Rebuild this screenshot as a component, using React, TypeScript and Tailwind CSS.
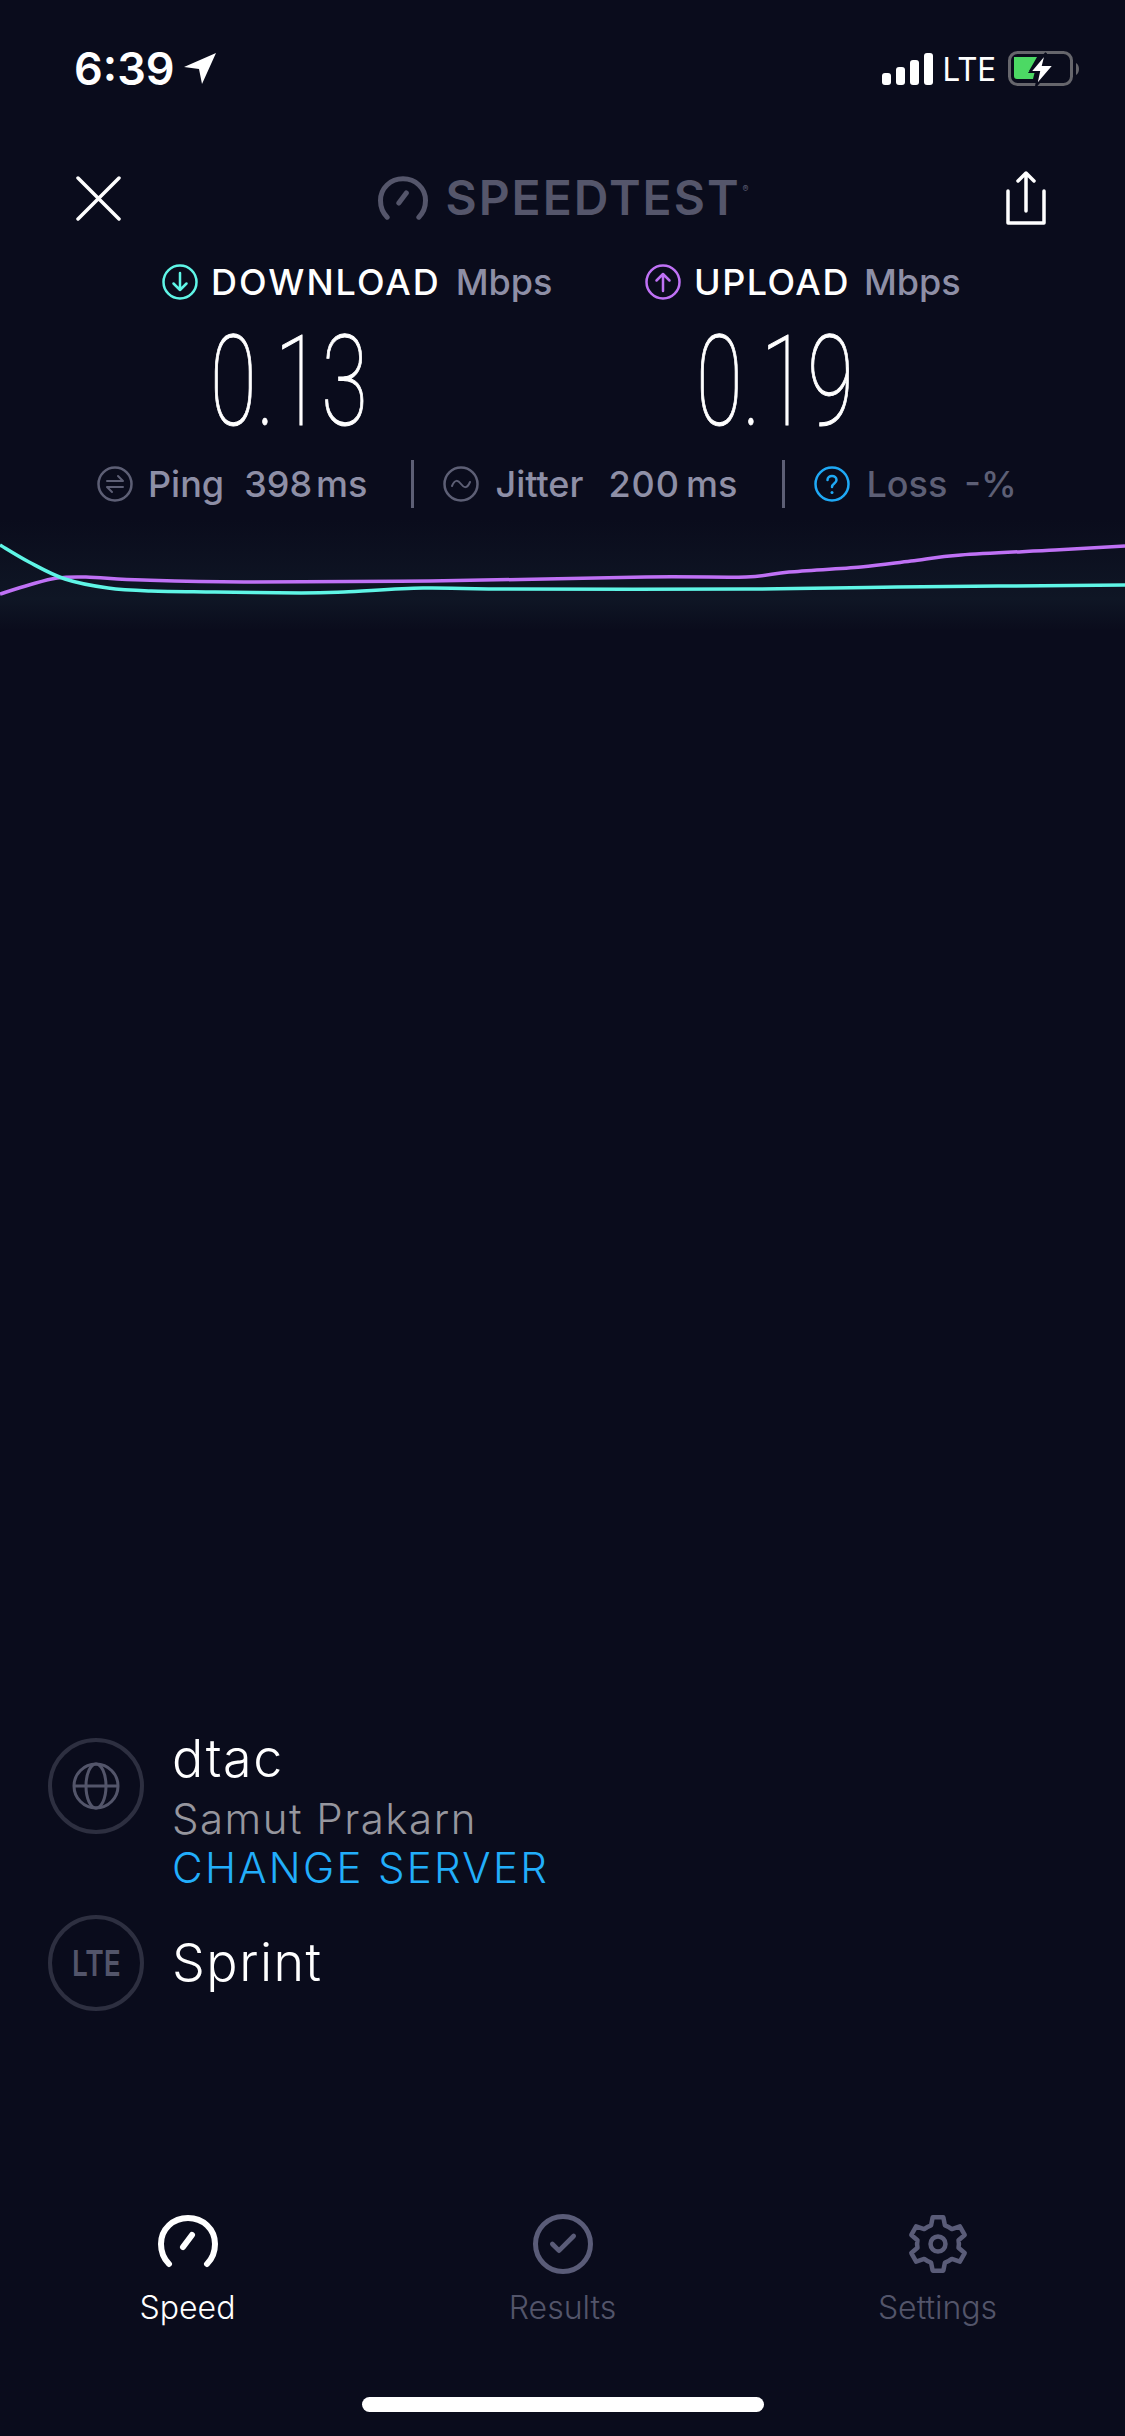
import { Check } from 'lucide-react'

const sans = 'font-[Inter,sans-serif]'

const uploadLine = [
  [0, 74], [29, 65], [57, 58], [86, 57], [143, 60], [244, 62], [430, 61], [646, 57], [746, 57],
  [789, 52], [861, 47], [911, 41], [961, 35], [1055, 30], [1125, 26],
]
const downloadLine = [
  [0, 25], [29, 42], [65, 59], [108, 68], [151, 71], [215, 72], [301, 73], [344, 72], [423, 68],
  [502, 69], [746, 69], [897, 67], [1125, 65],
]

// smooth line through the points
function smooth(pts: number[][]) {
  let d = `M${pts[0][0]} ${pts[0][1]}`
  for (let i = 0; i < pts.length - 1; i++) {
    const p0 = pts[i - 1] || pts[i]
    const p1 = pts[i]
    const p2 = pts[i + 1]
    const p3 = pts[i + 2] || p2
    const c1x = p1[0] + (p2[0] - p0[0]) / 6
    const c1y = p1[1] + (p2[1] - p0[1]) / 6
    const c2x = p2[0] - (p3[0] - p1[0]) / 6
    const c2y = p2[1] - (p3[1] - p1[1]) / 6
    d += `C${c1x} ${c1y} ${c2x} ${c2y} ${p2[0]} ${p2[1]}`
  }
  return d
}

function Gauge({ className, width }: { className: string; width: number }) {
  return (
    <svg viewBox="0 0 60 52" fill="none" stroke="currentColor" strokeLinecap="round" className={className}>
      <path d="M11 49C5 43 3 36 3 29C3 14 15 3 30 3C45 3 57 14 57 29C57 36 55 43 49 49" strokeWidth={width} />
      <path d="M25 32L34 20" strokeWidth={width} />
    </svg>
  )
}

function RoundIcon({ color, children }: { color: string; children: React.ReactNode }) {
  return (
    <svg viewBox="0 0 36 36" fill="none" stroke={color} strokeWidth="2.500" strokeLinecap="round" strokeLinejoin="round" className="w-[36px] h-[36px] shrink-0">
      <circle cx="18" cy="18" r="16.500" />
      {children}
    </svg>
  )
}

function StatusBar() {
  return (
    <div className="h-[144px] pt-[45px] pl-[74px] pr-[44px] flex items-start justify-between">
      <div className="flex items-center gap-[9px] text-white">
        <span className={`${sans} text-[45px] leading-[48px] font-semibold`}>6:39</span>
        <svg viewBox="0 0 32 32" className="w-[32px] h-[32px]">
          <path d="M32 0L18 31L15 16L0 14Z" fill="white" />
        </svg>
      </div>
      <div className="flex items-center h-[48px] text-white">
        <div className="flex items-end gap-[5px] h-[32px]">
          <div className="w-[9px] h-[12px] rounded-[3px] bg-white" />
          <div className="w-[9px] h-[18px] rounded-[3px] bg-white" />
          <div className="w-[9px] h-[25px] rounded-[3px] bg-white" />
          <div className="w-[9px] h-[32px] rounded-[3px] bg-white" />
        </div>
        <span className={`${sans} text-[33px] leading-[48px] font-normal ml-[10px] w-[52px] flex justify-center`}>
          <span className="scale-x-[0.95]">LTE</span>
        </span>
        <svg viewBox="0 0 73 36" className="w-[73px] h-[36px] ml-[13px]">
          <rect x="1.500" y="1.500" width="62" height="32" rx="8" fill="none" stroke="#66666c" strokeWidth="3" />
          <path d="M68 12C72 14 72 22 68 24Z" fill="#66666c" />
          <path d="M6 6H29L21 20H27L25 28H9Q6 28 6 25Z" fill="#4cd964" />
          <path d="M38 2L22 21H31L28 35L46 14H35Z" fill="white" stroke="#0a0c1c" strokeWidth="2" />
        </svg>
      </div>
    </div>
  )
}

function TopBar() {
  return (
    <div className="h-[108px] pl-[76px] pr-[79px] flex items-center justify-between">
      <svg viewBox="0 0 45 45" className="w-[45px] h-[45px]" stroke="white" strokeWidth="3.500" strokeLinecap="round">
        <path d="M2 2L43 43M43 2L2 43" />
      </svg>
      <div className="flex items-center gap-[17px] text-[#55566b] pr-[8px]">
        <Gauge className="w-[50px] h-[44px]" width={6} />
        <span className={`${sans} text-[48px] leading-[48px] font-semibold tracking-[2px] relative`}>
          SPEEDTEST
          <sup className="absolute -right-[8px] top-[10px] text-[9px] leading-[9px] tracking-normal">®</sup>
        </span>
      </div>
      <svg viewBox="0 0 40 54" fill="none" stroke="white" strokeWidth="3.500" strokeLinecap="round" strokeLinejoin="round" className="w-[40px] h-[54px]">
        <path d="M20 40V2M12 10L20 2L28 10" />
        <path d="M2 20V52H38V20" />
      </svg>
    </div>
  )
}

function Speeds() {
  const header = `${sans} flex items-center text-[36px] leading-[40px] font-medium`
  const value = 'font-[Roboto,sans-serif] font-thin text-white text-[126px] leading-[118px] scale-x-[0.675] [-webkit-text-stroke:1px_white]'
  return (
    <div className="mt-[10px] pl-[162px] flex">
      <div className="w-[483px]">
        <div className={header}>
          <RoundIcon color="#5ff5e6">
            <path d="M18 9V26M11.500 19.500L18 26L24.500 19.500" />
          </RoundIcon>
          <span className="text-white ml-[13px] tracking-[2px]">DOWNLOAD</span>
          <span className="text-[#8e8fa6] ml-[15px]">Mbps</span>
        </div>
        <div className="w-[254px] mt-[21px] h-[118px] flex items-center justify-center">
          <span className={value}>0.13</span>
        </div>
      </div>
      <div>
        <div className={header}>
          <RoundIcon color="#bf71f5">
            <path d="M18 27V10M11.500 16.500L18 10L24.500 16.500" />
          </RoundIcon>
          <span className="text-white ml-[13px] tracking-[1.500px]">UPLOAD</span>
          <span className="text-[#8e8fa6] ml-[14px]">Mbps</span>
        </div>
        <div className="w-[260px] mt-[21px] h-[118px] flex items-center justify-center">
          <span className={value}>0.19</span>
        </div>
      </div>
    </div>
  )
}

function Stats() {
  return (
    <div className={`${sans} mt-[19px] pl-[97px] flex items-center h-[48px] text-[36px] font-medium text-[#8e8fa6]`}>
      <RoundIcon color="#5d5f75">
        <path d="M10 15H26L21 10M26 21H10L15 26" strokeWidth="2" />
      </RoundIcon>
      <span className="ml-[15px]">Ping</span>
      <span className="ml-[20px]">398</span>
      <span className="ml-[4px]">ms</span>
      <div className="w-[3px] h-[48px] bg-[#5d5f75] ml-[44px]" />
      <div className="ml-[29px]">
        <RoundIcon color="#5d5f75">
          <path d="M9 20C12 13 15 14 18 18C21 22 24 23 27 16" strokeWidth="2" />
        </RoundIcon>
      </div>
      <span className="ml-[16px]">Jitter</span>
      <span className="ml-[25px] tracking-[1px]">200</span>
      <span className="ml-[6px]">ms</span>
      <div className="w-[3px] h-[48px] bg-[#5d5f75] ml-[45px]" />
      <div className="ml-[29px]">
        <RoundIcon color="#1fa9f5">
          <path d="M13.500 14C13.500 8.500 22.500 8.500 22.500 14C22.500 17.500 18 17.500 18 21" strokeWidth="2.500" />
          <path d="M18 26.500V26.600" strokeWidth="3" />
        </RoundIcon>
      </div>
      <span className="ml-[16px] text-[#5d5f75]">Loss</span>
      <span className="ml-[17px] text-[#5d5f75]">-%</span>
    </div>
  )
}

function Chart() {
  return (
    <svg viewBox="0 0 1125 110" className="w-[1125px] h-[110px] mt-[12px] block" fill="none">
      <defs>
        <linearGradient id="glow" x1="0" y1="0" x2="0" y2="1">
          <stop offset="0" stopColor="#14202e" stopOpacity="0" />
          <stop offset="0.72" stopColor="#14202e" stopOpacity="0.5" />
          <stop offset="1" stopColor="#14202e" stopOpacity="0" />
        </linearGradient>
      </defs>
      <rect x="0" y="0" width="1125" height="110" fill="url(#glow)" />
      <path d={smooth(uploadLine)} stroke="#bf71f5" strokeWidth="3.500" />
      <path d={smooth(downloadLine)} stroke="#5ff5e6" strokeWidth="3.500" />
    </svg>
  )
}

function Servers() {
  return (
    <div className={`${sans} mt-[1108px] pl-[48px]`}>
      <div className="flex items-start gap-[28px]">
        <div className="w-[96px] h-[96px] rounded-full border-[4px] border-[#2d2f40] flex items-center justify-center">
          <svg viewBox="0 0 48 48" fill="none" stroke="#53556a" strokeWidth="3" className="w-[48px] h-[48px]">
            <circle cx="24" cy="24" r="22" />
            <ellipse cx="24" cy="24" rx="10" ry="22" />
            <path d="M2 24H46" />
          </svg>
        </div>
        <div className="flex flex-col -mt-[5px]">
          <span className="text-[52px] leading-[52px] tracking-[1.500px] text-white font-light">dtac</span>
          <span className="text-[42px] leading-[52px] tracking-[1.500px] text-[#96969e] font-light mt-[8px]">Samut Prakarn</span>
          <span className="text-[42px] leading-[46px] tracking-[2.300px] text-[#22aefb] font-light">CHANGE SERVER</span>
        </div>
      </div>
      <div className="flex items-center gap-[28px] mt-[24px]">
        <div className="w-[96px] h-[96px] rounded-full border-[4px] border-[#2d2f40] flex items-center justify-center">
          <span className="text-[36px] font-semibold text-[#53556a] scale-x-[0.78]">LTE</span>
        </div>
        <span className="text-[52px] leading-[60px] tracking-[1.500px] text-white font-light">Sprint</span>
      </div>
    </div>
  )
}

function TabBar() {
  return (
    <div className={`${sans} mt-[203px] grid grid-cols-3 text-[32px] leading-[36px] font-light`}>
      <div className="flex flex-col items-center text-white">
        <Gauge className="w-[60px] h-[54px] mb-[6px]" width={6} />
        <span className="mt-[16px]">Speed</span>
      </div>
      <div className="flex flex-col items-center text-[#53556a]">
        <div className="w-[60px] h-[60px] rounded-full border-[5px] border-[#5a5c78] flex items-center justify-center text-[#5a5c78]">
          <Check size={32} strokeWidth={3.500} />
        </div>
        <span className="mt-[16px]">Results</span>
      </div>
      <div className="flex flex-col items-center text-[#53556a]">
        <svg viewBox="0 0 24 24" fill="none" stroke="#5a5c78" strokeWidth="1.700" strokeLinejoin="round" className="w-[64px] h-[64px] -my-[2px]">
          <path d="M10 2H14L14.600 5Q16 5.500 17.200 6.400L20.200 5.400L22 8.600L19.700 10.600Q20 12 19.700 13.400L22 15.400L20.200 18.600L17.200 17.600Q16 18.500 14.600 19L14 22H10L9.400 19Q8 18.500 6.800 17.600L3.800 18.600L2 15.400L4.300 13.400Q4 12 4.300 10.600L2 8.600L3.800 5.400L6.800 6.400Q8 5.500 9.400 5Z" />
          <circle cx="12" cy="12" r="2.800" />
        </svg>
        <span className="mt-[16px]">Settings</span>
      </div>
    </div>
  )
}

export default function App() {
  return (
    <div className="w-[1125px] h-[2436px] bg-[#0a0c1c] overflow-hidden">
      <StatusBar />
      <TopBar />
      <Speeds />
      <Stats />
      <Chart />
      <Servers />
      <TabBar />
      <div className="w-[402px] h-[15px] mx-auto mt-[71px] rounded-full bg-white" />
    </div>
  )
}
